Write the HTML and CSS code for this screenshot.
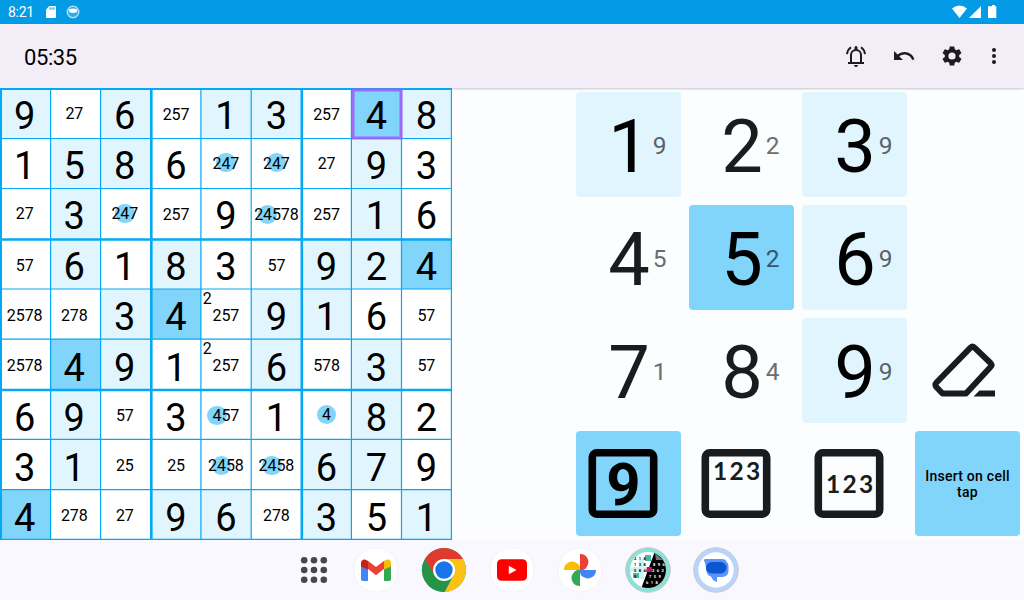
FILE: index.html
```html
<!DOCTYPE html>
<html lang="en">
<head>
<meta charset="utf-8">
<title>Sudoku</title>
<link rel="stylesheet" href="styles.css">
</head>
<body>
<header class="status">
  <span class="clock">8:21</span>
  <svg class="sd" width="10" height="12" viewBox="0 0 10 12"><path fill="#fff" d="M3.300 0H9q1 0 1 1v10q0 1-1 1H1q-1 0-1-1V3.600z"/><path stroke="#039be5" stroke-width="1" d="M4 1.300v2.400M6 1.300v2.400M8 1.300v2.400"/></svg>
  <svg class="ring" width="14" height="14" viewBox="0 0 14 14"><circle cx="7" cy="7" r="5.700" fill="#2dacea" stroke="#a9dcf7" stroke-width="1.600"/><path fill="#fff" d="M3 4.600Q7 2.600 11 4.600V7Q7 8.800 3.400 7z"/></svg>
  <svg class="signals" width="46" height="14" viewBox="0 0 46 14"><path fill="#fff" d="M0 3.600Q7.500-2.600 15 3.600L7.500 13zM29 1v12H17zM38 1.300h2V0h3v1.300h1.300V13H36V1.300z"/></svg>
</header>
<div class="toolbar">
  <span class="timer">05:35</span>
  <svg class="tool" viewBox="0 0 24 24"><path fill="none" stroke="#1d1b20" stroke-width="2" d="M7 18.500V11a5 5 0 0 1 10 0v7.500M4 19h16"/><path fill="#1d1b20" d="M10.500 3.500a1.500 1.500 0 0 1 3 0V6h-3zM10 21h4a2 2 0 0 1-4 0z"/><path fill="none" stroke="#1d1b20" stroke-width="1.900" d="M7 3.200Q3.400 5.800 3 10.200M17 3.200Q20.600 5.800 21 10.200"/></svg>
  <svg class="tool" viewBox="0 0 24 24"><path fill="#1d1b20" d="M12.500 8c-2.650 0-5.050.990-6.900 2.600L2 7v9h9l-3.620-3.620c1.390-1.160 3.160-1.880 5.120-1.880 3.540 0 6.550 2.310 7.600 5.500l2.370-.780C21.080 11.030 17.150 8 12.500 8z"/></svg>
  <svg class="tool" viewBox="0 0 24 24"><path fill="#1d1b20" d="M19.140 12.940c.040-.300.060-.610.060-.940 0-.320-.020-.640-.070-.940l2.030-1.580a.490.490 0 0 0 .120-.610l-1.920-3.320a.488.488 0 0 0-.590-.220l-2.390.960c-.500-.380-1.030-.700-1.620-.940l-.360-2.540a.484.484 0 0 0-.480-.410h-3.840c-.240 0-.430.170-.470.410l-.360 2.540c-.590.240-1.130.570-1.620.940l-2.390-.960c-.220-.080-.470 0-.590.220L2.740 8.870c-.120.210-.080.470.120.610l2.030 1.580c-.050.300-.090.630-.090.940s.020.640.070.940l-2.030 1.580a.490.490 0 0 0-.120.610l1.920 3.320c.120.220.370.290.590.220l2.390-.960c.500.380 1.030.700 1.620.940l.360 2.540c.050.240.240.410.480.410h3.840c.240 0 .440-.170.470-.410l.360-2.540c.590-.240 1.130-.560 1.620-.940l2.390.960c.220.080.470 0 .590-.220l1.920-3.320c.120-.220.070-.470-.120-.610l-2.010-1.580zM12 15.600A3.600 3.600 0 1 1 12 8.400a3.600 3.600 0 0 1 0 7.200z"/></svg>
  <svg class="tool more" viewBox="0 0 24 24"><g fill="#1d1b20"><circle cx="12" cy="6" r="2"/><circle cx="12" cy="12" r="2"/><circle cx="12" cy="18" r="2"/></g></svg>
</div>
<main class="game">
  <div class="board">
    <div class="cells" id="cells"></div>
    <svg class="lines" width="453" height="452" viewBox="0 0 453 452">
      <g fill="none" stroke="#03a9f4">
        <path stroke-width="1.200" d="M50.600 0V452M100.600 0V452M200.900 0V452M251.200 0V452M351.400 0V452M401.500 0V452M451.400 0V452M0 50.500H452M0 100.500H452M0 201H452M0 251.200H452M0 351.400H452M0 401.600H452M0 451.400H452"/>
        <path stroke-width="2.600" d="M151.300 0V452M301.800 0V452M0 151.500H452M0 302H452"/>
        <path stroke-width="2" d="M1 0V452M0 1H452"/>
      </g>
      <rect x="353" y="2" width="48" height="48" fill="none" stroke="#a45cf7" stroke-opacity=".88" stroke-width="3"/>
    </svg>
  </div>
  <div class="keypad">
    <div class="key light"><b>1</b><i>9</i></div>
    <div class="key"><b>2</b><i>2</i></div>
    <div class="key light"><b>3</b><i>9</i></div>
    <div></div>
    <div class="key"><b>4</b><i>5</i></div>
    <div class="key mid"><b>5</b><i>2</i></div>
    <div class="key light"><b>6</b><i>9</i></div>
    <div></div>
    <div class="key"><b>7</b><i>1</i></div>
    <div class="key"><b>8</b><i>4</i></div>
    <div class="key light"><b>9</b><i>9</i></div>
    <div class="mode eraser"><svg width="64" height="56" viewBox="0 0 64 56"><path fill="none" stroke="#191c1d" stroke-width="6" stroke-linejoin="round" d="M38.500 4.700Q40.500 2.700 42.500 4.700L58.500 20Q60.500 22 58.500 24L34 50.500H10.500L4.300 44Q2.600 41.500 4.500 39.500z"/><path fill="#191c1d" d="M47.500 47.500H63V53.500H41.500z"/></svg></div>
    <div class="mode mid"><svg width="70" height="70" viewBox="0 0 70 70"><rect x="4.300" y="3.800" width="61.400" height="61.400" rx="4.500" fill="none" stroke="#000" stroke-width="7.600"/><text class="nine" x="35.500" y="55.500" text-anchor="middle">9</text></svg></div>
    <div class="mode"><svg width="70" height="70" viewBox="0 0 70 70"><rect x="4.300" y="3.800" width="61.400" height="61.400" rx="4.500" fill="none" stroke="#191c1d" stroke-width="7.600"/><text class="marks" x="12" y="30.500">123</text></svg></div>
    <div class="mode"><svg width="70" height="70" viewBox="0 0 70 70"><rect x="4.300" y="3.800" width="61.400" height="61.400" rx="4.500" fill="none" stroke="#191c1d" stroke-width="7.600"/><text class="marks" x="12" y="44">123</text></svg></div>
    <div class="insert mid">Insert on cell tap</div>
  </div>
</main>
<nav class="dock">
  <svg class="apps" width="28" height="28" viewBox="0 0 28 28"><g fill="#45464f"><circle cx="4.200" cy="4.200" r="3.300"/><circle cx="14" cy="4.200" r="3.300"/><circle cx="23.800" cy="4.200" r="3.300"/><circle cx="4.200" cy="14" r="3.300"/><circle cx="14" cy="14" r="3.300"/><circle cx="23.800" cy="14" r="3.300"/><circle cx="4.200" cy="23.800" r="3.300"/><circle cx="14" cy="23.800" r="3.300"/><circle cx="23.800" cy="23.800" r="3.300"/></g></svg>
  <svg class="app" viewBox="0 0 46 46"><circle cx="23" cy="23" r="22" fill="#fff" stroke="#f1eff5" stroke-width=".8"/><path fill="#4285f4" d="M8 16l7 4v14h-5q-2 0-2-2z"/><path fill="#34a853" d="M38 16l-7 4v14h5q2 0 2-2z"/><path fill="#ea4335" d="M14.500 13.500L23 20l8.500-6.500v8L23 28.200l-8.500-6.700z"/><path fill="#c5221f" d="M8 19v-3.500c0-3.500 3.500-4.500 6-2.600l1 .8v8.200L8 19z" transform="translate(0 .5)"/><path fill="#fbbc04" d="M38 19v-3.500c0-3.500-3.500-4.500-6-2.600l-1 .8v8.200L38 19z" transform="translate(0 .5)"/></svg>
  <svg class="app" viewBox="0 0 46 46"><circle cx="23" cy="23" r="22" fill="#34a853"/><path fill="#de3a2e" d="M4 12A22 22 0 0 1 42 12H23L13.500 28.500z"/><path fill="#fbc116" d="M23 12H42A22 22 0 0 1 23.500 45L32.500 28.500z"/><path fill="#269447" d="M4 12L13.500 28.500Q20 36 30 32.500L23.500 45A22 22 0 0 1 4 12z"/><circle cx="23" cy="23" r="11" fill="#fff"/><circle cx="23" cy="23" r="8.700" fill="#1a73e8"/></svg>
  <svg class="app" viewBox="0 0 46 46"><circle cx="23" cy="23" r="22" fill="#fff" stroke="#f1eff5" stroke-width=".8"/><rect x="8" y="12.300" width="30" height="21.400" rx="4.500" fill="#f00"/><path fill="#fff" d="M19.800 18.700L27.500 23l-7.700 4.300z"/></svg>
  <svg class="app" viewBox="0 0 46 46"><circle cx="23" cy="23" r="22" fill="#fff" stroke="#f1eff5" stroke-width=".8"/><path fill="#ea4335" d="M23 7a8 8 0 0 1 7 12.500Q29 22 26 23h-3z"/><path fill="#4285f4" d="M39 23a8 8 0 0 1-12.500 7Q24 29 23 26v-3z"/><path fill="#34a853" d="M23 39a8 8 0 0 1-7-12.500Q17 24 20 23h3z"/><path fill="#fbbc04" d="M7 23a8 8 0 0 1 12.500-7Q22 17 23 20v3z"/></svg>
  <svg class="app" viewBox="0 0 46 46"><defs><clipPath id="disc"><circle cx="23" cy="23" r="18"/></clipPath></defs><circle cx="23" cy="23" r="22.300" fill="#8be0d9" stroke="#cbc7ca" stroke-width="1"/><g clip-path="url(#disc)"><path fill="#fff" d="M0 0H46V46H0z"/><path fill="#c8f5ef" d="M14 12h5v20h-5zM4 20h20v5H4z"/><path fill="#4db6ac" d="M20 8h6v6h-6zM8 26h6v5H8z"/><path fill="#000" d="M30 4H42V42H16z"/><path fill="#777" d="M30 6l8 7h-7z"/><path fill="#c2185b" d="M22 20h5v5h-6z"/><g class="tiny"><text x="9" y="13">2 1 8</text><text x="9" y="19">1 3 8</text><text x="9" y="25">5 8 4</text><text x="9" y="31">9</text><g class="inv"><text x="28" y="19">8 9 6</text><text x="27" y="25">2 6 2</text><text x="24" y="31">7 5 9</text><text x="21" y="37">6 1 8</text></g></g></g></svg>
  <svg class="app" viewBox="0 0 46 46"><circle cx="23" cy="23" r="22.300" fill="#b8d4fa" stroke="#cac8d0" stroke-width="1"/><circle cx="23" cy="23" r="17.700" fill="#fff"/><path fill="#5b93fb" d="M12.500 12H29Q33 12 33.500 15Q35.500 16 35.500 19V23.500Q35.500 30 29 30H24V35Q20 34 18 29.500Q13 28 13 21.500Q13 17 11 13.500Q10.500 12 12.500 12z"/><rect x="13" y="15" width="20.500" height="11.500" rx="5.700" fill="#0b57d0"/></svg>
</nav>
<script src="board.js"></script>
</body>
</html>
```
FILE: styles.css
```css
* { box-sizing: border-box; }
body { margin: 0; width: 1024px; height: 600px; overflow: hidden; display: flex; flex-direction: column; font-family: Roboto, sans-serif; color: #000; background: #fbfdff; }
.status { height: 24px; flex: none; display: flex; align-items: center; padding: 0 28px 0 8px; background: #039be5; color: #fff; font-size: 14px; }
.clock { width: 38px; letter-spacing: -.3px; }
.ring { margin-left: 10px; }
.signals { margin-left: auto; margin-top: -1px; margin-right: -2px; }
.toolbar { height: 64px; flex: none; display: flex; align-items: center; gap: 24px; padding: 2px 18px 0 24px; background: #f3edf7; box-shadow: 0 1px 2px rgba(0,0,0,.22); }
.timer { flex: 1; font-size: 22px; letter-spacing: -.4px; padding-top: 1px; }
.tool { width: 24px; height: 24px; margin-top: -2px; }
.more { margin-left: -6px; }
.game { height: 452px; flex: none; display: flex; justify-content: space-between; }
.board { position: relative; width: 453px; height: 452px; }
.cells { display: grid; padding: 1px 0 0 1px; grid-template-columns: 49.300px 50px 51px 49.500px 50.200px 50.800px 49.500px 50.100px 50px; grid-template-rows: 49.500px 50px 51px 49.500px 50.200px 50.800px 49.400px 50.200px 49.800px; }
.lines { position: absolute; left: 0; top: 0; }
.cell { position: relative; display: flex; align-items: center; justify-content: center; isolation: isolate; background: #fff; line-height: 1; white-space: nowrap; }
.light { background: #e1f5fe; }
.mid { background: #81d4fa; }
.big { font-size: 38px; padding-top: 4px; }
.small { font-size: 16px; letter-spacing: -.1px; padding-top: 2px; }
.raised { padding-top: 0; }
.cell:nth-child(9n+1), .cell:nth-child(9n+2), .cell:nth-child(9n+3) { padding-right: 2px; }
.cell:nth-child(n+28) { padding-top: 3px; }
.raised:nth-child(n+55) { padding-top: 1px; }
.cell:nth-child(n+64) { padding-top: 4px; }
.big:nth-child(n+28) { padding-top: 6px; }
.big:nth-child(n+64) { padding-top: 7px; }
.hit { position: relative; }
.hit::before { content: ""; position: absolute; z-index: -1; left: 50%; top: 50%; width: 19.400px; height: 19.400px; margin: -10px 0 0 -9.700px; border-radius: 50%; background: #81d4fa; }
.corner { position: absolute; left: 2px; top: 2px; }
.keypad { display: grid; grid-template-columns: repeat(4, 105px); grid-template-rows: repeat(4, 105px); gap: 8px; padding: 4px 4px 0 0; }
.key, .mode, .insert { border-radius: 4px; }
.key { display: grid; grid-template-columns: 1fr auto 1fr; align-items: center; color: #191c1d; }
.key b { grid-column: 2; font-weight: 400; font-size: 74px; line-height: 105px; padding: 2px 0 0 1px; }
.key i { font-style: normal; font-size: 24.500px; color: #6b6e70; padding-left: 3px; }
.key.light, .key.mid { color: #000; }
.key.mid i { color: #33586a; }
.key.light i { color: #5a6266; }
.mode { display: flex; align-items: center; justify-content: center; padding-right: 11px; }
.eraser { padding: 0 7px 0 0; }
.nine { font: 700 60px Roboto, sans-serif; }
.marks { font: 700 24.500px Lato, sans-serif; letter-spacing: 2.300px; fill: #191c1d; }
.insert { display: flex; align-items: center; justify-content: center; text-align: center; padding: 0 8px; font-size: 14px; font-weight: 500; line-height: 16px; letter-spacing: .25px; }
.dock { height: 60px; flex: none; display: flex; align-items: center; gap: 22px; padding-left: 300px; background: #faf8ff; }
.apps { margin-right: 3px; }
.app { width: 46px; height: 46px; }
.tiny { font: 700 4px Roboto, sans-serif; word-spacing: 1.500px; }
.inv { fill: #fff; }
```
FILE: board.js
```js
// Each row lists nine cells; suffix "l" = light fill, "m" = selected digit fill.
// A single digit is an entry, "n..." is a note, "2/257" has a corner note.
const rows = [
  "9l n27 6l n257 1l 3l n257 4m 8l",
  "1 5l 8l 6 n247 n247 n27 9l 3",
  "n27 3l n247 n257 9 n24578 n257 1l 6",
  "n57 6l 1 8l 3 n57 9l 2l 4m",
  "n2578 n278 3l 4m 2/257 9l 1l 6 n57",
  "n2578 4m 9l 1 2/257 6l n578 3l n57",
  "6 9l n57 3 n457 1 n4 8l 2",
  "3 1l n25 n25 n2458 n2458 6l 7l 9",
  "4m n278 n27 9l 6l n278 3l 5 1l"
];
const board = document.getElementById("cells");
for (const token of rows.join(" ").split(" ")) {
  const cell = document.createElement("div");
  const note = /^n|\//.test(token);
  const digits = token.replace(/^n|^.*\/|[lm]$/g, "");
  cell.className = "cell " + (note ? "small" : "big");
  if (token.endsWith("l")) cell.classList.add("light");
  if (token.endsWith("m")) cell.classList.add("mid");
  if (note && !/[58]/.test(digits)) cell.classList.add("raised");
  let html = note ? digits.replace("4", '<span class="hit">4</span>') : digits;
  html = `<span>${html}</span>`;
  if (token.includes("/")) html += `<span class="corner">${token[0]}</span>`;
  cell.innerHTML = html;
  board.append(cell);
}
```
